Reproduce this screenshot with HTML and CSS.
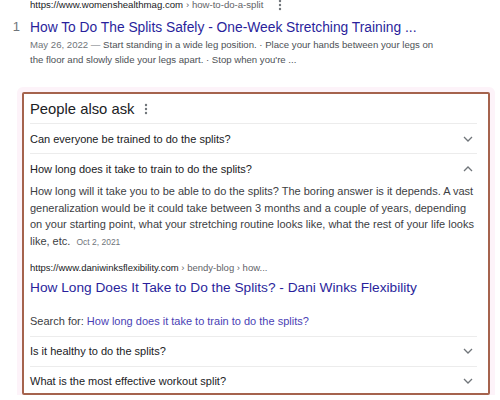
FILE: index.html
```html
<!DOCTYPE html>
<html lang="en">
<head>
    <meta charset="UTF-8">
    <title>People also ask</title>
    <link rel="stylesheet" href="styles.css">
</head>
<body>
    <div class="result">
        <div class="rank"></div>
        <div class="cite">https://www.womenshealthmag.com <span class="crumb">› how-to-do-a-split</span>
            <svg class="kebab" width="4" height="12" viewBox="0 0 4 12"><circle cx="2" cy="2" r="1.2"/><circle cx="2" cy="6" r="1.2"/><circle cx="2" cy="10" r="1.2"/></svg>
        </div>
        <div class="rank">1</div>
        <a class="title" href="#">How To Do The Splits Safely - One-Week Stretching Training ...</a>
        <div class="rank"></div>
        <div class="snippet"><span class="date">May 26, 2022 —</span> Start standing in a wide leg position. · Place your hands between your legs on the floor and slowly slide your legs apart. · Stop when you're ...</div>
    </div>

    <div class="paa">
        <div class="paa-head">People also ask
            <svg class="kebab" width="4" height="12" viewBox="0 0 4 12"><circle cx="2" cy="2" r="1.2"/><circle cx="2" cy="6" r="1.2"/><circle cx="2" cy="10" r="1.2"/></svg>
        </div>
        <div class="question">
            <span>Can everyone be trained to do the splits?</span>
            <svg class="chev" width="10" height="6" viewBox="0 0 10 6"><path d="M1 1l4 4 4-4"/></svg>
        </div>
        <div class="question open">
            <span>How long does it take to train to do the splits?</span>
            <svg class="chev" width="10" height="6" viewBox="0 0 10 6"><path d="M1 5l4-4 4 4"/></svg>
        </div>
        <div class="answer">
            <p>How long will it take you to be able to do the splits? The boring answer is it depends. A vast generalization would be it could take between 3 months and a couple of years, depending on your starting point, what your stretching routine looks like, what the rest of your life looks like, etc. <span class="small-date">Oct 2, 2021</span></p>
            <div class="answer-cite">https://www.daniwinksflexibility.com <span class="crumb">› bendy-blog › how...</span></div>
            <a class="answer-title" href="#">How Long Does It Take to Do the Splits? - Dani Winks Flexibility</a>
            <div class="search-for">Search for: <a href="#">How long does it take to train to do the splits?</a></div>
        </div>
        <div class="question">
            <span>Is it healthy to do the splits?</span>
            <svg class="chev" width="10" height="6" viewBox="0 0 10 6"><path d="M1 1l4 4 4-4"/></svg>
        </div>
        <div class="question">
            <span>What is the most effective workout split?</span>
            <svg class="chev" width="10" height="6" viewBox="0 0 10 6"><path d="M1 1l4 4 4-4"/></svg>
        </div>
    </div>
</body>
</html>
```

FILE: styles.css
```css
body {
    margin: 0;
    background: #ffffff;
    font-family: "Liberation Sans", Arial, sans-serif;
    color: #202124;
}
a {
    text-decoration: none;
}
.result {
    display: grid;
    grid-template-columns: 30px 1fr;
    margin-top: -2px;
    padding-right: 55px;
}
.rank {
    text-align: right;
    padding-right: 10px;
    color: #70757a;
    font-size: 13px;
    line-height: 18px;
    margin-top: 6px;
}
.cite {
    display: flex;
    align-items: center;
    gap: 3px;
    font-size: 9.6px;
    line-height: 14px;
    color: #202124;
}
.crumb {
    color: #5f6368;
}
.kebab {
    fill: #70757a;
    margin-left: 12px;
}
.title {
    color: #2a1f9c;
    font-size: 13.8px;
    line-height: 18px;
    margin-top: 7px;
    white-space: nowrap;
}
.snippet {
    font-size: 9.6px;
    line-height: 15px;
    color: #4d5156;
}
.date {
    color: #70757a;
}
.paa {
    margin: 25px 10px 0 22px;
    height: 299px;
    overflow: hidden;
    border: 2px solid #a5634d;
    border-radius: 2px;
    padding: 0 11px 0 6px;
    box-shadow: 0 0 0 5px #fdf3f9;
}
.paa-head {
    display: flex;
    align-items: center;
    height: 29px;
    font-size: 14.8px;
    color: #202124;
    border-bottom: 1px solid #ececec;
}
.paa-head .kebab {
    margin-left: 10px;
}
.question {
    display: flex;
    align-items: center;
    justify-content: space-between;
    height: 29px;
    font-size: 11px;
    color: #202124;
    border-bottom: 1px solid #ececec;
}
.question.open {
    border-bottom: none;
}
.chev {
    fill: none;
    stroke: #70757a;
    stroke-width: 1.3;
    margin-right: 4px;
}
.answer {
    border-bottom: 1px solid #ececec;
    padding-bottom: 7px;
}
.answer p {
    margin: 0;
    font-size: 11px;
    line-height: 16.7px;
    color: #3c4043;
}
.small-date {
    font-size: 8.5px;
    color: #70757a;
    margin-left: 3px;
}
.answer-cite {
    margin-top: 10px;
    font-size: 9.5px;
    line-height: 13px;
    color: #202124;
}
.answer-title {
    display: block;
    margin-top: 4px;
    font-size: 13.7px;
    line-height: 20px;
    color: #2a1f9c;
}
.search-for {
    margin-top: 15px;
    font-size: 11px;
    line-height: 16px;
    color: #3c4043;
}
.search-for a {
    color: #4a3fb5;
}
```
